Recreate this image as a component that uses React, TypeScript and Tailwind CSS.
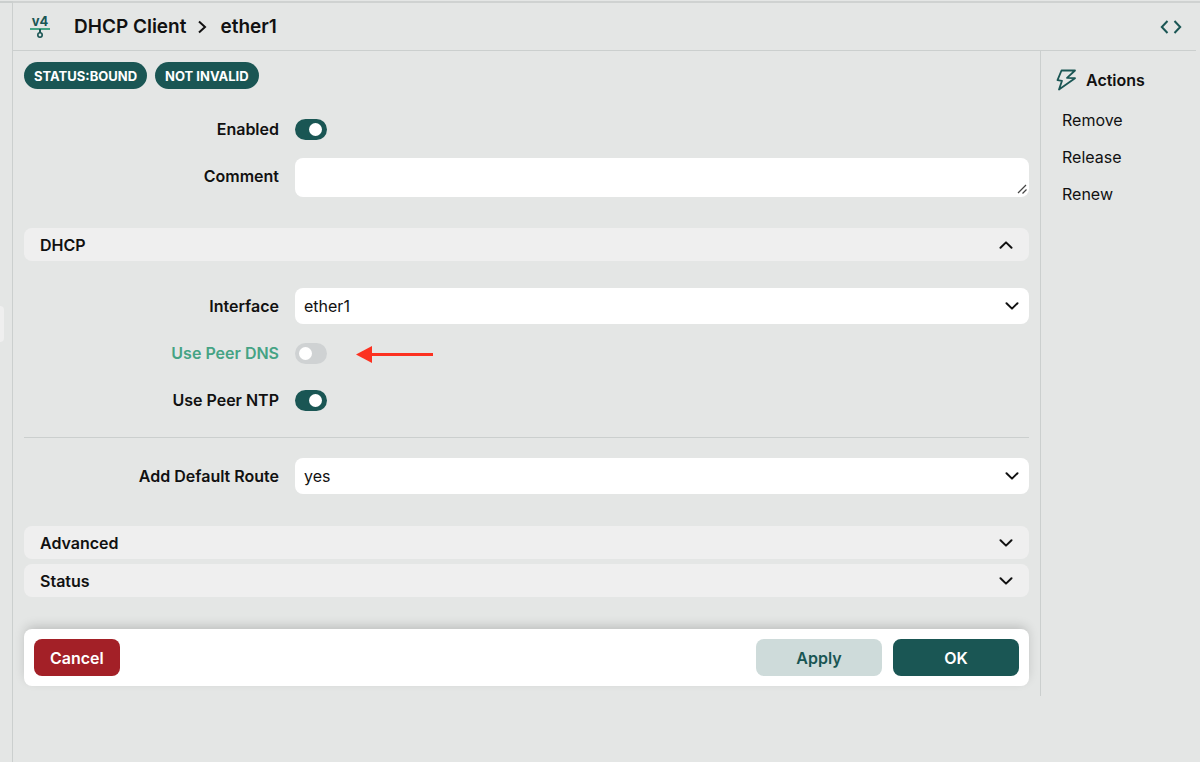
import { useState } from "react";
import type { ReactNode } from "react";

const Chevron = ({ className = "" }: { className?: string }) => (
    <svg className={className} width="14" height="8" viewBox="0 0 14 8" fill="none" stroke="#111" strokeWidth="2" strokeLinecap="round" strokeLinejoin="round" aria-hidden="true">
        <path d="M1.5 1.2 7 6.6l5.500-5.400" />
    </svg>
);

const Badge = ({ children }: { children: ReactNode }) => (
    <span className="flex h-[27px] items-center rounded-full bg-[#1a5654] px-[10px] text-[13px] font-bold text-white">{children}</span>
);

type RowProps = { id: string; label: string; tall?: boolean; changed?: boolean; children: ReactNode };

const Row = ({ id, label, tall, changed, children }: RowProps) => (
    <div className="grid grid-cols-[255px_1fr] items-start gap-4">
        <label htmlFor={id} className={`text-right ${tall ? "leading-9" : "leading-6"} ${changed ? "text-[#45a384]" : ""}`}>{label}</label>
        <div className="flex min-h-6 items-center">{children}</div>
    </div>
);

const Toggle = ({ id, on }: { id: string; on?: boolean }) => (
    <input
        id={id}
        type="checkbox"
        role="switch"
        defaultChecked={on}
        className="h-[21px] w-8 appearance-none rounded-full bg-[#cfd2d3] p-1 before:block before:size-[13px] before:rounded-full before:bg-white checked:bg-[#1a5654] checked:before:ml-[10px]"
    />
);

const Select = ({ id, options }: { id: string; options: string[] }) => (
    <div className="relative w-full">
        <select id={id} className="block h-9 w-full appearance-none rounded-lg bg-white px-[9px] font-normal">
            {options.map((option) => (
                <option key={option}>{option}</option>
            ))}
        </select>
        <Chevron className="pointer-events-none absolute top-[14px] right-[10px]" />
    </div>
);

const SectionBar = ({ title, open, onClick }: { title: string; open: boolean; onClick: () => void }) => (
    <button type="button" aria-expanded={open} onClick={onClick} className="flex h-[33px] w-full items-center justify-between rounded-lg bg-[#efefef] px-4">
        {title}
        <Chevron className={open ? "rotate-180" : ""} />
    </button>
);

const Header = () => (
    <header className="mr-1 flex h-12 items-center border-b border-[#cbcfce] pr-[14px] pl-4">
        <svg width="22" height="30" viewBox="0 0 22 30" fill="none" aria-hidden="true">
            <text x="11" y="14" textAnchor="middle" fontFamily="Inter, sans-serif" fontSize="13" fontWeight="700" fill="#1a5654">v4</text>
            <path d="M1 17h20" stroke="#45a384" strokeWidth="2" />
            <path d="M11 17v4" stroke="#1a5654" strokeWidth="2" />
            <circle cx="11" cy="23" r="2.200" stroke="#1a5654" strokeWidth="1.600" />
        </svg>
        <nav className="ml-[23px] flex items-center gap-3 text-[19px]">
            <a href="#dhcp">DHCP Client</a>
            <svg width="10" height="14" viewBox="0 0 10 14" fill="none" stroke="#111" strokeWidth="2" aria-hidden="true">
                <path d="m1 1.500 6 5.500-6 5.500" />
            </svg>
            <span>ether1</span>
        </nav>
        <button type="button" aria-label="Source" className="ml-auto">
            <svg width="22" height="14" viewBox="0 0 22 14" fill="none" stroke="#1a5654" strokeWidth="2" aria-hidden="true">
                <path d="M7.500 1 1.800 7l5.700 6M14.500 1l5.700 6-5.700 6" />
            </svg>
        </button>
    </header>
);

const Actions = () => (
    <aside className="w-[159px] pt-[17px] pl-[15px]">
        <h2 className="flex items-center gap-[10px]">
            <svg width="20" height="22" viewBox="0 0 20 22" fill="none" stroke="#1a5654" strokeWidth="1.800" strokeLinejoin="round" aria-hidden="true">
                <path d="M5.500 1.500H19L11 8.800l8 .4L3 20.500l3-8.700-4.500-.6z" />
            </svg>
            Actions
        </h2>
        <ul className="mt-[9px] pl-[6px] font-normal">
            {["Remove", "Release", "Renew"].map((action) => (
                <li key={action} className="flex h-[37px] items-center">
                    <button type="button">{action}</button>
                </li>
            ))}
        </ul>
    </aside>
);

const App = () => {
    const [open, setOpen] = useState({ dhcp: true, advanced: false, status: false });

    return (
        <div className="flex min-h-screen bg-[#e4e6e5] pt-px font-['Inter',sans-serif] text-base leading-6 font-semibold text-[#111]">
            <div className="flex w-[13px] shrink-0 items-start border-t-2 border-r border-[#cbcfce] pt-[303px]">
                <div className="h-9 w-1 rounded-r-md bg-[#efefef]" />
            </div>

            <div className="min-w-0 flex-1 border-t-2 border-[#cfd2d1]">
                <Header />
                <div className="flex items-start">
                    <main className="min-w-0 flex-1 border-r border-[#cbcfce] px-[11px] pt-[11px] pb-[10px]">
                        <div className="flex gap-2">
                            <Badge>STATUS:BOUND</Badge>
                            <Badge>NOT INVALID</Badge>
                        </div>

                        <form onSubmit={(e) => e.preventDefault()}>
                            <div className="mt-7 space-y-[17px]">
                                <Row id="enabled" label="Enabled">
                                    <Toggle id="enabled" on />
                                </Row>
                                <Row id="comment" label="Comment" tall>
                                    <div className="relative w-full">
                                        <textarea id="comment" className="block h-[39px] w-full resize-y rounded-lg bg-white px-[9px] py-[7px] font-normal [&::-webkit-resizer]:hidden" />
                                        <svg className="pointer-events-none absolute right-[2px] bottom-[3px]" width="10" height="10" viewBox="0 0 10 10" stroke="#444" strokeWidth="1.200" aria-hidden="true">
                                            <path d="M1 9l8-8M5.500 9.500 9.500 5.500" />
                                        </svg>
                                    </div>
                                </Row>
                            </div>

                            <div className="mt-[31px]">
                                <SectionBar title="DHCP" open={open.dhcp} onClick={() => setOpen({ ...open, dhcp: !open.dhcp })} />
                            </div>
                            {open.dhcp && (
                                <div className="py-[27px]">
                                    <Row id="interface" label="Interface" tall>
                                        <Select id="interface" options={["ether1"]} />
                                    </Row>
                                    <div className="relative mt-[17px]">
                                        <Row id="peer-dns" label="Use Peer DNS" changed>
                                            <Toggle id="peer-dns" />
                                        </Row>
                                        <svg className="absolute top-1 left-[332px]" width="78" height="18" viewBox="0 0 78 18" aria-hidden="true">
                                            <path d="M0 9.500 16 1v17z" fill="#fc3120" />
                                            <path d="M15 9.500h62" stroke="#fc3120" strokeWidth="3" />
                                        </svg>
                                    </div>
                                    <div className="mt-[23px]">
                                        <Row id="peer-ntp" label="Use Peer NTP">
                                            <Toggle id="peer-ntp" on />
                                        </Row>
                                    </div>
                                    <hr className="mt-[25px] mb-5 border-[#cbcfce]" />
                                    <Row id="default-route" label="Add Default Route" tall>
                                        <Select id="default-route" options={["yes", "no", "special classless"]} />
                                    </Row>
                                </div>
                            )}
                            <div className="mt-[5px] space-y-[5px]">
                                <SectionBar title="Advanced" open={open.advanced} onClick={() => setOpen({ ...open, advanced: !open.advanced })} />
                                <SectionBar title="Status" open={open.status} onClick={() => setOpen({ ...open, status: !open.status })} />
                            </div>

                            <div className="mt-8 flex gap-[11px] rounded-lg bg-white p-[10px] shadow-[0_-4px_12px_-2px_rgba(0,0,0,0.2)]">
                                <button type="button" className="mr-auto h-[37px] rounded-lg bg-[#a32027] px-4 text-white">Cancel</button>
                                <button type="button" className="h-[37px] w-[126px] rounded-lg bg-[#cedbda] text-[#1a5654]">Apply</button>
                                <button type="submit" className="h-[37px] w-[126px] rounded-lg bg-[#1a5654] text-white">OK</button>
                            </div>
                        </form>
                    </main>
                    <Actions />
                </div>
            </div>
        </div>
    );
};

export default App;
